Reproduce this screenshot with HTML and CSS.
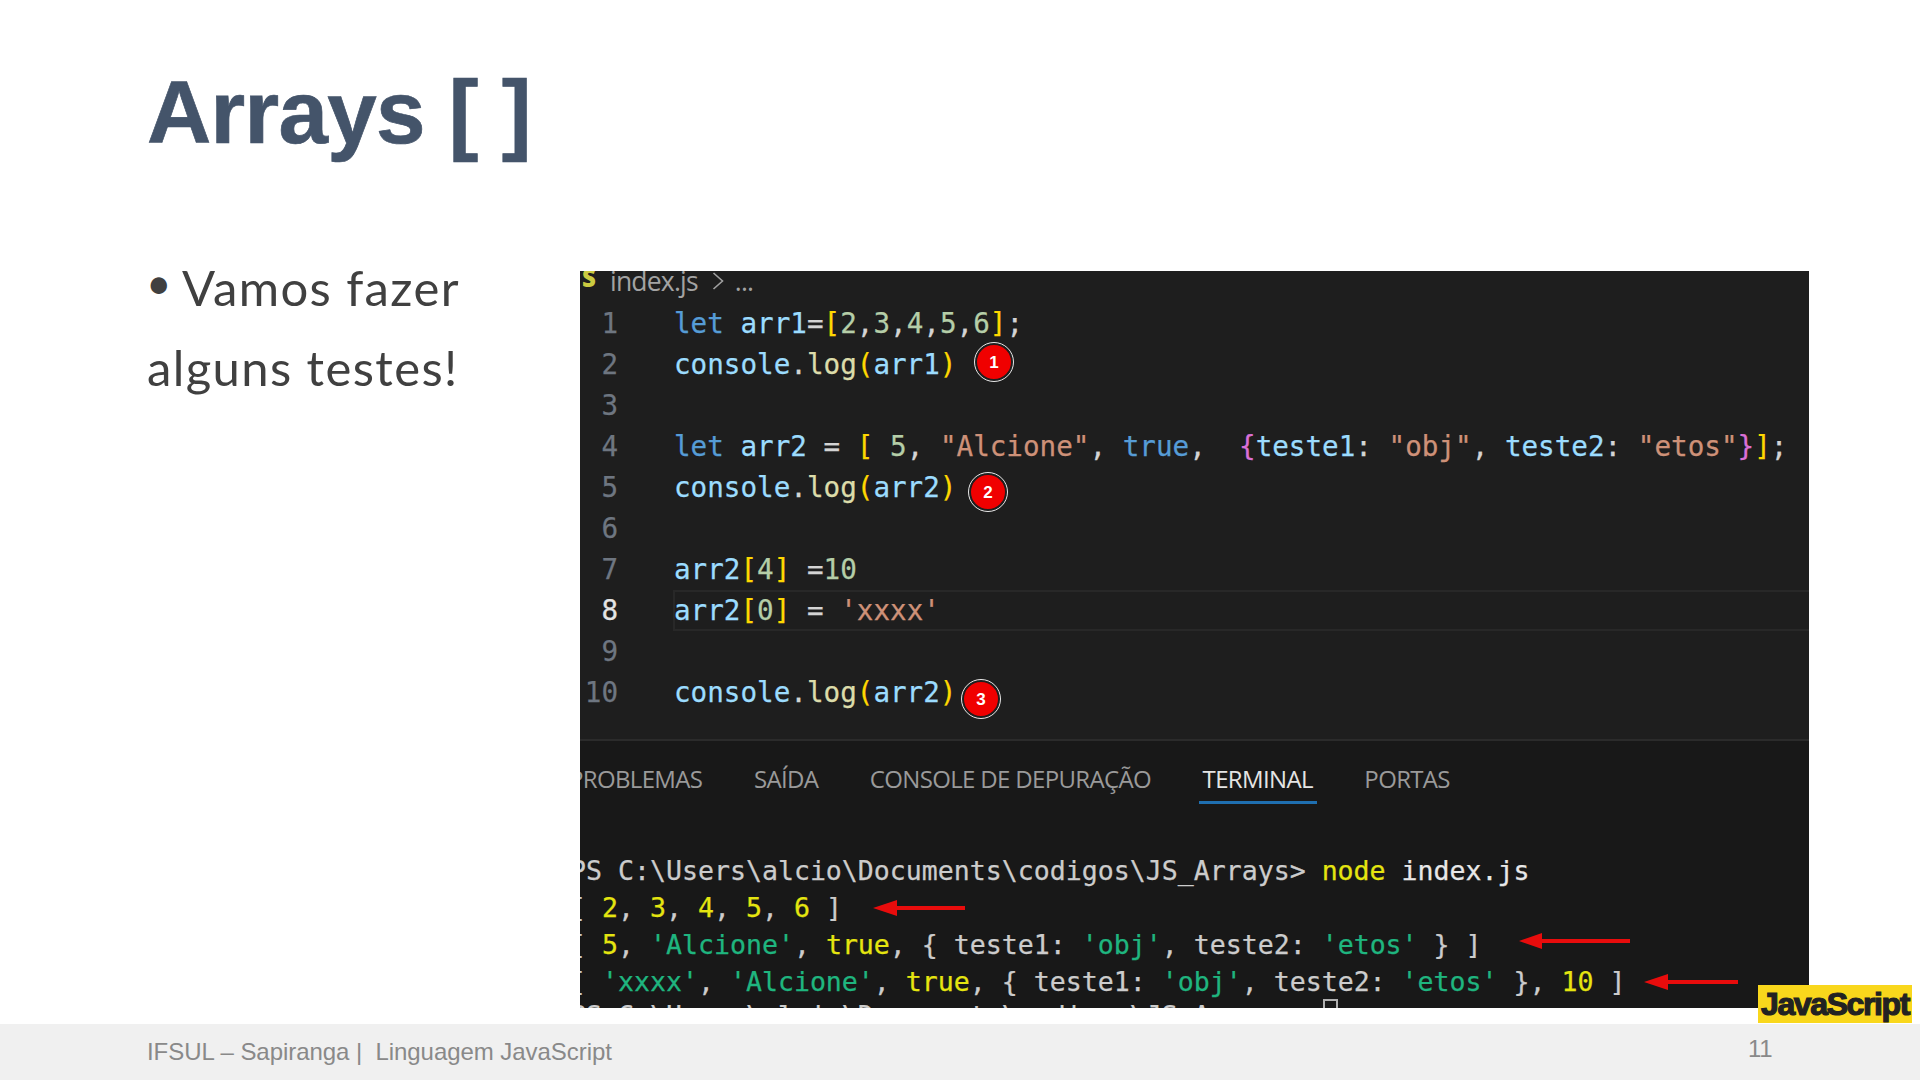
FILE: index.html
```html
<!DOCTYPE html>
<html lang="pt-BR">
<head>
<meta charset="utf-8">
<title>Arrays [ ]</title>
<link rel="stylesheet" href="styles.css">
</head>
<body>
<div class="slide">
  <main class="main">
    <h1 class="title">Arrays [ ]</h1>
    <div class="content">
      <p class="lead"><span class="bullet">•</span>Vamos fazer<br>alguns testes!</p>
      <section class="shot">
        <div class="editor">
          <div class="crumbs"><span class="fileicon">S</span><span>index.js</span>
            <svg class="chev" viewBox="0 0 12 20" width="12" height="20"><path d="M1.5 2 L10.5 10 L1.5 18" fill="none" stroke="#a0a0a0" stroke-width="1.6"/></svg>
            <span>...</span></div>
          <div class="line"><span class="ln">1</span><code class="code"><i class="kw">let</i> <i class="var">arr1</i><i class="pn">=</i><i class="br">[</i><i class="num">2</i><i class="pn">,</i><i class="num">3</i><i class="pn">,</i><i class="num">4</i><i class="pn">,</i><i class="num">5</i><i class="pn">,</i><i class="num">6</i><i class="br">]</i><i class="pn">;</i></code></div>
          <div class="line"><span class="ln">2</span><code class="code"><i class="var">console</i><i class="pn">.</i><i class="fn">log</i><i class="br">(</i><i class="var">arr1</i><i class="br">)</i></code></div>
          <div class="line"><span class="ln">3</span><code class="code"></code></div>
          <div class="line"><span class="ln">4</span><code class="code"><i class="kw">let</i> <i class="var">arr2</i> <i class="pn">=</i> <i class="br">[</i> <i class="num">5</i><i class="pn">,</i> <i class="str">"Alcione"</i><i class="pn">,</i> <i class="kw">true</i><i class="pn">,</i>  <i class="br2">{</i><i class="var">teste1</i><i class="pn">:</i> <i class="str">"obj"</i><i class="pn">,</i> <i class="var">teste2</i><i class="pn">:</i> <i class="str">"etos"</i><i class="br2">}</i><i class="br">]</i><i class="pn">;</i></code></div>
          <div class="line"><span class="ln">5</span><code class="code"><i class="var">console</i><i class="pn">.</i><i class="fn">log</i><i class="br">(</i><i class="var">arr2</i><i class="br">)</i></code></div>
          <div class="line"><span class="ln">6</span><code class="code"></code></div>
          <div class="line"><span class="ln">7</span><code class="code"><i class="var">arr2</i><i class="br">[</i><i class="num">4</i><i class="br">]</i> <i class="pn">=</i><i class="num">10</i></code></div>
          <div class="line current"><span class="ln">8</span><code class="code"><i class="var">arr2</i><i class="br">[</i><i class="num">0</i><i class="br">]</i> <i class="pn">=</i> <i class="str">'xxxx'</i></code></div>
          <div class="line"><span class="ln">9</span><code class="code"></code></div>
          <div class="line"><span class="ln">10</span><code class="code"><i class="var">console</i><i class="pn">.</i><i class="fn">log</i><i class="br">(</i><i class="var">arr2</i><i class="br">)</i></code></div>
        </div>
        <div class="panel">
          <nav class="tabs">
            <span class="tab first">PROBLEMAS</span>
            <span class="tab">SAÍDA</span>
            <span class="tab">CONSOLE DE DEPURAÇÃO</span>
            <span class="tab active">TERMINAL</span>
            <span class="tab">PORTAS</span>
          </nav>
          <div class="term">
            <div class="tl">PS C:\Users\alcio\Documents\codigos\JS_Arrays&gt; <b class="cmd">node</b> <span class="white">index.js</span></div>
            <div class="tl">[ <b class="y">2</b>, <b class="y">3</b>, <b class="y">4</b>, <b class="y">5</b>, <b class="y">6</b> ]</div>
            <div class="tl">[ <b class="y">5</b>, <b class="g">'Alcione'</b>, <b class="y">true</b>, { teste1: <b class="g">'obj'</b>, teste2: <b class="g">'etos'</b> } ]</div>
            <div class="tl">[ <b class="g">'xxxx'</b>, <b class="g">'Alcione'</b>, <b class="y">true</b>, { teste1: <b class="g">'obj'</b>, teste2: <b class="g">'etos'</b> }, <b class="y">10</b> ]</div>
            <div class="tl">PS C:\Users\alcio\Documents\codigos\JS_Arrays&gt; <span class="cursor"></span></div>
          </div>
        </div>
        <span class="badge b1">1</span>
        <span class="badge b2">2</span>
        <span class="badge b3">3</span>
        <svg class="arrow a1" viewBox="0 0 92 16"><path d="M0 8 L24 0 L24 6 L92 6 L92 10 L24 10 L24 16 Z" fill="#e80c0c"/></svg>
        <svg class="arrow a2" viewBox="0 0 111 16"><path d="M0 8 L23 0 L23 6 L111 6 L111 10 L23 10 L23 16 Z" fill="#e80c0c"/></svg>
        <svg class="arrow a3" viewBox="0 0 94 16"><path d="M0 8 L24 0 L24 6 L94 6 L94 10 L24 10 L24 16 Z" fill="#e80c0c"/></svg>
      </section>
    </div>
  </main>
  <footer class="footer">
    <span class="foot-text">IFSUL – Sapiranga |  Linguagem JavaScript</span>
    <span class="page-no">11</span>
  </footer>
  <div class="jslogo">JavaScript</div>
</div>
</body>
</html>
```
FILE: styles.css
```css
* { box-sizing: border-box; }
html, body { margin: 0; padding: 0; background: #fff; }
body { width: 1920px; height: 1080px; overflow: hidden; }
.slide { position: relative; width: 1920px; height: 1080px; display: flex; flex-direction: column; }
.main { height: 1024px; padding-left: 147px; display: flex; flex-direction: column; }
.title { margin: 62px 0 0; height: 209px; font: 700 89px/100px "Liberation Sans", Arial, sans-serif; letter-spacing: -0.7px; -webkit-text-stroke: 0.7px #44546a; color: #44546a; }
.content { display: flex; align-items: flex-start; }
.lead { width: 433px; margin: -24px 0 0; font: 400 49px/80px Lato, sans-serif; letter-spacing: 1.4px; color: #404040; white-space: nowrap; }
.bullet { display: inline-block; width: 36px; margin-left: -1px; font-size: 44px; line-height: 1; vertical-align: 7px; }

.shot { position: relative; width: 1229px; height: 737px; overflow: hidden; background: #181818; flex: none; }
.shot i, .shot b { font-style: normal; font-weight: 400; }

.editor { height: 470px; background: #1e1e1e; border-bottom: 2px solid #2b2b2b; font-family: "DejaVu Sans Mono", monospace; font-size: 27.6px; -webkit-text-stroke: 0.25px; }
.crumbs { height: 32px; display: flex; align-items: flex-start; font: 400 26.5px/20px "Open Sans", sans-serif; letter-spacing: -0.8px; color: #a3a3a3; white-space: nowrap; overflow: hidden; -webkit-text-stroke: 0; }
.fileicon { width: 30px; padding-left: 2px; margin-top: -3px; font-weight: 800; font-size: 24px; color: #cbcb41; }
.chev { margin: 0 11px 0 14px; }
.line { display: flex; height: 41px; line-height: 41px; white-space: pre; position: relative; }
.ln { width: 38px; text-align: right; color: #6e7681; flex: none; }
.code { margin-left: 56px; font: inherit; color: #d4d4d4; }
.current .ln { color: #e4e4e4; }
.current::after { content: ""; position: absolute; left: 93px; right: 0; top: 0; bottom: 0; border: 2px solid #282828; border-right: 0; }
.kw { color: #569cd6; }
.var { color: #9cdcfe; }
.fn { color: #dcdcaa; }
.br { color: #ffd700; }
.br2 { color: #da70d6; }
.num { color: #b5cea8; }
.str { color: #ce9178; }
.pn { color: #d4d4d4; }

.tabs { display: flex; height: 63px; gap: 43.6px; margin-left: -15px; font: 400 24px/34px "Open Sans", sans-serif; letter-spacing: -0.66px; color: #9a9a9a; white-space: nowrap; }
.tab { height: 63px; padding: 21px 4px 0; border-bottom: 3px solid transparent; }
.tab.active { color: #e4e4e4; border-bottom-color: #1f6fb0; }
.term { padding-top: 47.6px; font-family: "DejaVu Sans Mono", monospace; font-size: 26.57px; line-height: 37px; color: #cccccc; margin-left: -10px; -webkit-text-stroke: 0.25px; }
.tl { height: 37px; white-space: pre; }
.tl:last-child { margin-top: -3px; }
.y, .cmd { color: #e5e510; }
.g { color: #1fb57f; }
.white { color: #e8e8e8; }
.cursor { position: absolute; left: 743px; top: 728px; width: 15px; height: 14px; border: 2px solid #b0b0b0; }

.badge { position: absolute; width: 40px; height: 40px; border-radius: 50%; background: #f00000; border: 3px solid #1e1e1e; outline: 1.5px solid #e8e8e8; outline-offset: -1.5px; display: flex; align-items: center; justify-content: center; color: #fff; font: 700 17px/1 "Liberation Sans", sans-serif; }
.b1 { left: 394px; top: 71px; }
.b2 { left: 388px; top: 201px; }
.b3 { left: 381px; top: 408px; }
.arrow { position: absolute; height: 16px; }
.a1 { left: 293px; top: 629px; width: 92px; }
.a2 { left: 939px; top: 662px; width: 111px; }
.a3 { left: 1064px; top: 703px; width: 94px; }

.footer { height: 56px; background: #f0f0f0; padding: 0 148px 0 147px; display: flex; align-items: center; justify-content: space-between; color: #898989; font: 400 24px/1 "Liberation Sans", sans-serif; white-space: pre; }
.foot-text { letter-spacing: -0.05px; }
.page-no { margin-top: -7px; letter-spacing: -0.5px; }
.jslogo { position: absolute; left: 1758px; top: 985px; width: 154px; height: 38px; background: #f9d71c; color: #222; font: 700 32px/38px "Liberation Sans", sans-serif; letter-spacing: -1.4px; -webkit-text-stroke: 1.2px #222; text-align: center; white-space: nowrap; }
```
